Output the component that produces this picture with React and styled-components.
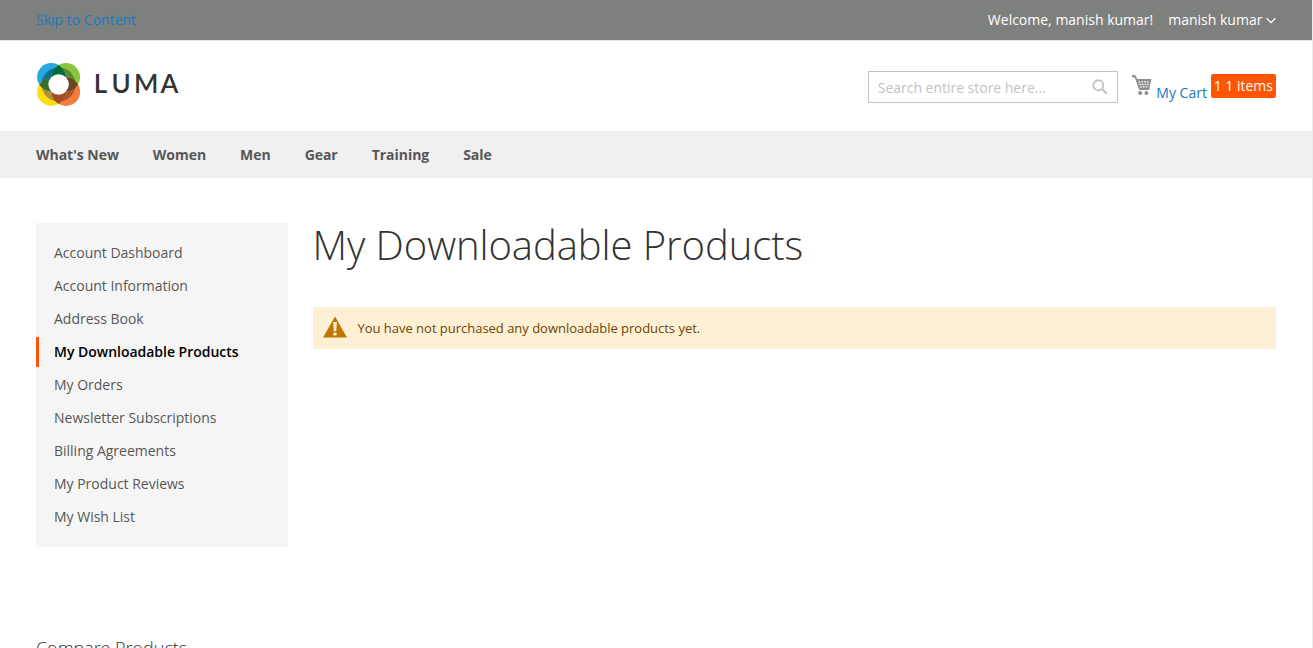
import React from "react";
import styled, { createGlobalStyle, css } from "styled-components";

const GlobalStyle = createGlobalStyle`
  * { box-sizing: border-box; }
  html, body { margin: 0; height: 648px; overflow: hidden; background: #fff; }
  body { font-family: "Open Sans", "Helvetica Neue", Helvetica, Arial, sans-serif; font-size: 14px; line-height: 20px; color: #333; }
  ul { list-style: none; margin: 0; padding: 0; }
  a { text-decoration: none; color: #1979c3; }
`;

const Page = styled.div`
  height: 648px;
  overflow: hidden;
  border-right: 1px solid #ececec;
`;

const Panel = styled.div`
  display: flex;
  justify-content: space-between;
  height: 41px;
  padding: 10px 36px 0;
  background: #7e807e;
  border-bottom: 1px solid #e5e5e5;
  color: #fff;
`;

const Account = styled.div`
  display: flex;
  align-items: flex-start;
  gap: 15px;
`;

const CustomerName = styled.span`
  display: flex;
  align-items: center;
  gap: 3.6px;
`;

const Header = styled.header`
  display: flex;
  justify-content: space-between;
  height: 90px;
  padding: 22px 36px 0;
`;

const Logo = styled.a`
  display: flex;
  svg { display: block; }
`;

const HeaderTools = styled.div`
  display: flex;
  align-items: flex-start;
`;

const Search = styled.div`
  display: flex;
  align-items: center;
  justify-content: space-between;
  width: 250px;
  height: 32px;
  margin-top: 8px;
  padding: 2px 9px 0 8.6px;
  border: 1px solid #c2c2c2;
  color: #c2c2c2;
  letter-spacing: -0.02px;
  svg { margin-top: -3px; }
`;

const Cart = styled.a`
  display: flex;
  margin: 11px 0 0 13px;
`;

const CartLabel = styled.span`
  margin: 9px 3.8px 0 4.2px;
`;

const Counter = styled.span`
  height: 24px;
  padding: 0 3px;
  border-radius: 2px;
  background: #ff5501;
  color: #fff;
  line-height: 24px;
`;

const Nav = styled.nav`
  display: flex;
  gap: 34px;
  height: 47px;
  padding: 0 36px;
  background: #f0f0f0;
  line-height: 47px;
`;

const NavLink = styled.a`
  color: #575757;
  font-weight: 700;
  letter-spacing: -0.04px;
`;

const Columns = styled.main`
  display: flex;
  gap: 25px;
  padding: 45px 36px 0;
`;

const Sidebar = styled.aside`
  width: 252px;
  flex: none;
`;

const Menu = styled.ul`
  padding: 15px 0 12px;
  height: 324px;
  background: #f5f5f5;
  letter-spacing: -0.01px;
`;

const MenuItem = styled.li`
  height: 30px;
  margin-bottom: 3px;
  padding: 5px 18px 5px 15px;
  border-left: 3px solid transparent;
  color: #575757;
  ${({ $current }) => $current && css`
    border-color: #ff5501;
    color: #000;
    font-weight: 600;
    letter-spacing: -0.02px;
  `}
`;

const BlockTitle = styled.h2`
  margin: 91px 0 0;
  font-size: 18px;
  font-weight: 300;
  line-height: 20px;
  letter-spacing: -0.05px;
`;

const Content = styled.section`
  flex: 1;
`;

const Title = styled.h1`
  margin: 0 0 0 -0.5px;
  height: 84px;
  font-size: 40px;
  font-weight: 300;
  line-height: 44px;
  letter-spacing: -0.07px;
`;

const Notice = styled.div`
  display: flex;
  align-items: center;
  gap: 10.5px;
  height: 42px;
  padding: 0 10px;
  background: #fdf0d5;
  color: #6f4400;
  font-size: 13px;
  letter-spacing: -0.02px;
  svg { margin-top: -2px; }
`;

const links = [
  "Account Dashboard", "Account Information", "Address Book",
  "My Downloadable Products", "My Orders", "Newsletter Subscriptions",
  "Billing Agreements", "My Product Reviews", "My Wish List",
];

const categories = ["What's New", "Women", "Men", "Gear", "Training", "Sale"];

function LumaLogo() {
  return (
    <svg width="148" height="45" viewBox="-0.4 0.7 148 45" role="img" aria-label="LUMA">
      <defs>
        <clipPath id="tl"><circle cx="14.8" cy="14.8" r="14.1" /></clipPath>
        <clipPath id="tr"><circle cx="29.6" cy="14.8" r="14.1" /></clipPath>
        <clipPath id="bl"><circle cx="14.8" cy="29.6" r="14.1" /></clipPath>
        <clipPath id="br"><circle cx="29.6" cy="29.6" r="14.1" /></clipPath>
      </defs>
      <circle cx="14.8" cy="14.8" r="14.1" fill="#27a8e0" />
      <circle cx="29.6" cy="14.8" r="14.1" fill="#8cc540" />
      <circle cx="14.8" cy="29.6" r="14.1" fill="#ffde17" />
      <circle cx="29.6" cy="29.6" r="14.1" fill="#f47b3c" />
      <circle cx="22.2" cy="22.2" r="17" fill="#0d7394" clipPath="url(#tl)" />
      <circle cx="22.2" cy="22.2" r="17" fill="#598936" clipPath="url(#tr)" />
      <circle cx="22.2" cy="22.2" r="17" fill="#a99335" clipPath="url(#bl)" />
      <circle cx="22.2" cy="22.2" r="17" fill="#a9572c" clipPath="url(#br)" />
      <g clipPath="url(#tl)">
        <circle cx="29.6" cy="14.8" r="14.1" fill="#006b38" />
        <circle cx="14.8" cy="29.6" r="14.1" fill="#3b6c32" />
      </g>
      <g clipPath="url(#br)">
        <circle cx="14.8" cy="29.6" r="14.1" fill="#a34b22" />
        <circle cx="29.6" cy="14.8" r="14.1" fill="#664720" />
      </g>
      <circle cx="22.2" cy="22.2" r="10.2" fill="#fff" />
      <text x="57.3 75 97.5 124" y="31.2" fontFamily="Lato" fontWeight="600" fontSize="26" fill="#333">LUMA</text>
    </svg>
  );
}

function SearchIcon() {
  return (
    <svg width="16" height="16" viewBox="0 0 16 16" fill="none" stroke="#c2c2c2">
      <circle cx="6.3" cy="6.3" r="5" strokeWidth="1.9" />
      <path d="M10 10l4.6 4.6" strokeWidth="2.2" />
    </svg>
  );
}

function CartIcon() {
  return (
    <svg width="21" height="22" viewBox="0 0 21 22">
      <path d="M1.8 2.2h2.2l1.6 3.6 3.3 9.4h9.3" fill="none" stroke="#8f8f8f" strokeWidth="1.8" />
      <circle cx="2.4" cy="2.3" r="1.4" fill="#8f8f8f" />
      <path d="M4.8 5H20.4l-2.2 11H8.6z" fill="#8f8f8f" />
      <path d="M7.6 7.9h11M8.3 10.4h10M9.2 12.9h8.4" stroke="#fff" strokeWidth="1.1" strokeDasharray="1.6 1.1" />
      <circle cx="9.2" cy="18.9" r="2" fill="#8f8f8f" />
      <circle cx="15.4" cy="18.9" r="2" fill="#8f8f8f" />
    </svg>
  );
}

function WarningIcon() {
  return (
    <svg width="24" height="22" viewBox="0 0 24 22">
      <path d="M12 .5L24 21.5H0z" fill="#c07600" />
      <path d="M10.1 6h3.8L13.2 15.2h-2.4z" fill="#fdf0d5" />
      <rect x="10.4" y="16.7" width="3.2" height="2.8" fill="#fdf0d5" />
    </svg>
  );
}

export default function App() {
  return (
    <Page>
      <GlobalStyle />
      <Panel>
        <a href="#content">Skip to Content</a>
        <Account>
          <span>Welcome, manish kumar!</span>
          <CustomerName>
            manish kumar
            <svg width="10" height="7" viewBox="0 0 10 7" fill="none" stroke="#fff" strokeWidth="1.3">
              <path d="M.6 1.2L5 5.6l4.4-4.4" />
            </svg>
          </CustomerName>
        </Account>
      </Panel>
      <Header>
        <Logo href="#"><LumaLogo /></Logo>
        <HeaderTools>
          <Search><span>Search entire store here...</span><SearchIcon /></Search>
          <Cart href="#">
            <CartIcon />
            <CartLabel>My Cart</CartLabel>
            <Counter>1 1 items</Counter>
          </Cart>
        </HeaderTools>
      </Header>
      <Nav>
        {categories.map((name) => <NavLink key={name} href="#">{name}</NavLink>)}
      </Nav>
      <Columns id="content">
        <Sidebar>
          <Menu>
            {links.map((name) => (
              <MenuItem key={name} $current={name === "My Downloadable Products"}>{name}</MenuItem>
            ))}
          </Menu>
          <BlockTitle>Compare Products</BlockTitle>
        </Sidebar>
        <Content>
          <Title>My Downloadable Products</Title>
          <Notice><WarningIcon />You have not purchased any downloadable products yet.</Notice>
        </Content>
      </Columns>
    </Page>
  );
}
